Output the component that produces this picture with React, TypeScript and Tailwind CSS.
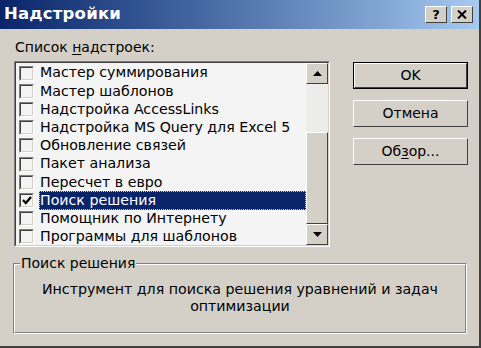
import React from 'react'

const items = [
  'Мастер суммирования',
  'Мастер шаблонов',
  'Надстройка AccessLinks',
  'Надстройка MS Query для Excel 5',
  'Обновление связей',
  'Пакет анализа',
  'Пересчет в евро',
  'Поиск решения',
  'Помощник по Интернету',
  'Программы для шаблонов',
]

const selected = 'Поиск решения'

function CheckBox({ checked }: { checked: boolean }) {
  return (
    <div className="w-[15px] h-[15px] shrink-0 border-t border-l border-[#808080] border-r border-b border-r-white border-b-white">
      <div className="w-full h-full border-t border-l border-[#404040] border-r border-b border-r-[#d4d0c8] border-b-[#d4d0c8] bg-[#f4f4f4] flex items-center justify-center">
        {checked && (
          <svg width="10" height="9" viewBox="0 0 10 9">
            <path d="M1 4 L3.8 7 L9 1" stroke="#000" strokeWidth="2.2" fill="none" />
          </svg>
        )}
      </div>
    </div>
  )
}

function ScrollButton({ up }: { up: boolean }) {
  return (
    <div className="h-[21px] bg-[#d4d0c8] border border-t-white border-l-white border-r-[#404040] border-b-[#404040] flex items-center justify-center">
      <svg width="9" height="5" viewBox="0 0 9 5">
        {up ? <path d="M0 5 L4.5 0 L9 5 Z" fill="#000" /> : <path d="M0 0 L4.5 5 L9 0 Z" fill="#000" />}
      </svg>
    </div>
  )
}

function Button({ children, isDefault }: { children: React.ReactNode; isDefault?: boolean }) {
  return (
    <div className={`h-[27px] ${isDefault ? 'border border-black' : ''}`}>
      <div className="h-full bg-[#d4d0c8] border border-t-white border-l-white border-r-[#404040] border-b-[#404040] flex items-center justify-center text-[14px] text-black">
        {children}
      </div>
    </div>
  )
}

export default function App() {
  return (
    <div
      className="w-[481px] h-[348px] bg-[#d4d0c8] flex flex-col border-r-2 border-b-2 border-r-[#404040] border-b-[#404040] overflow-hidden"
      style={{ fontFamily: '"DejaVu Sans", Tahoma, sans-serif' }}
    >
      {/* title bar */}
      <div className="h-[29px] shrink-0 bg-gradient-to-r from-[#0a246a] to-[#a6caf0] flex items-center pl-[4px] pr-[6px]">
        <span className="text-white font-bold text-[16.5px] tracking-[0.2px]">Надстройки</span>
        <div className="ml-auto flex gap-[4px]">
          <div className="w-[22px] h-[17px] bg-[#d4d0c8] border border-t-white border-l-white border-r-[#404040] border-b-[#404040] flex items-center justify-center text-[13px] font-bold leading-none">
            ?
          </div>
          <div className="w-[22px] h-[17px] bg-[#d4d0c8] border border-t-white border-l-white border-r-[#404040] border-b-[#404040] flex items-center justify-center">
            <svg width="10" height="9" viewBox="0 0 10 9">
              <path d="M1 0.5 L9 8.5 M9 0.5 L1 8.5" stroke="#000" strokeWidth="2" />
            </svg>
          </div>
        </div>
      </div>

      <div className="flex pl-[14px] pr-[11px]">
        <div className="flex flex-col">
          <div className="h-[20px] mt-[8px] text-[14px] leading-[20px] pl-[1px]">
            Список <span className="underline underline-offset-2">н</span>адстроек:
          </div>
          {/* list box */}
          <div className="mt-[4px] w-[316px] h-[186px] border border-t-[#808080] border-l-[#808080] border-r-white border-b-white">
            <div className="w-full h-full border border-t-[#404040] border-l-[#404040] border-r-[#d4d0c8] border-b-[#d4d0c8] bg-[#f4f4f4] flex">
              <div className="flex-1 flex flex-col pt-[1px] pl-[3px]">
                {items.map((it) => {
                  const sel = it === selected
                  return (
                    <div key={it} className="h-[18.2px] flex items-center gap-[5px]">
                      <CheckBox checked={sel} />
                      <div
                        className={`flex-1 h-full flex items-center text-[14.2px] pl-[1px] ${
                          sel ? 'bg-[#0a246a] text-white outline-1 outline-dotted outline-[#d4d0c8] -outline-offset-1' : 'text-black'
                        }`}
                      >
                        {it}
                      </div>
                    </div>
                  )
                })}
              </div>
              {/* scrollbar */}
              <div className="w-[22px] flex flex-col">
                <ScrollButton up />
                <div className="h-[48px] bg-[#ececea]" />
                <div className="flex-1 bg-[#d4d0c8] border border-t-white border-l-white border-r-[#404040] border-b-[#404040]" />
                <ScrollButton up={false} />
              </div>
            </div>
          </div>
        </div>

        <div className="ml-auto mt-[33px] w-[115px] flex flex-col gap-[11px]">
          <Button isDefault>OK</Button>
          <Button>Отмена</Button>
          <Button>
            Об<span className="underline underline-offset-2">з</span>ор...
          </Button>
        </div>
      </div>

      {/* group box */}
      <div className="relative mx-[13px] mt-[16px] h-[71px] border border-t-[#808080] border-l-[#808080] border-r-white border-b-white mr-[12px]">
        <div className="h-full border border-t-white border-l-white border-r-[#808080] border-b-[#808080] flex flex-col items-center pt-[16px] text-[14.2px] leading-[17px] text-center">
          <div>Инструмент для поиска решения уравнений и задач</div>
          <div>оптимизации</div>
        </div>
        <span className="absolute left-[6px] -top-[10px] px-[1px] bg-[#d4d0c8] text-[14px] leading-[18px]">Поиск решения</span>
      </div>
    </div>
  )
}
